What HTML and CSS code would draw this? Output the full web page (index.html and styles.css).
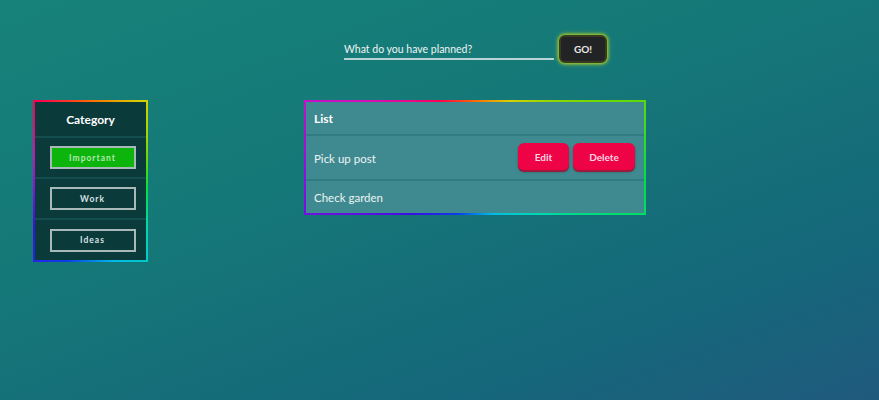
FILE: index.html
```html
<!DOCTYPE html>
<html>
<head>
<meta charset="utf-8">
<link rel="stylesheet" href="styles.css">
</head>
<body>
<div class="page">
  <div class="spacer"></div>
  <form class="add-form">
    <input class="add-input" type="text" placeholder="What do you have planned?">
    <button class="go-btn" type="button">GO!</button>
  </form>
  <aside class="rainbow cat-frame">
    <div class="cat">
      <div class="cat-title">Category</div>
      <div class="cat-row"><button class="cat-btn active" type="button">Important</button></div>
      <div class="cat-row"><button class="cat-btn" type="button">Work</button></div>
      <div class="cat-row last"><button class="cat-btn" type="button">Ideas</button></div>
    </div>
  </aside>
  <section class="rainbow list-frame">
    <div class="list">
      <div class="list-head">List</div>
      <div class="list-row">
        <span class="item-text">Pick up post</span>
        <div class="actions">
          <button class="act-btn edit" type="button">Edit</button>
          <button class="act-btn delete" type="button">Delete</button>
        </div>
      </div>
      <div class="list-row last">
        <span class="item-text">Check garden</span>
      </div>
    </div>
  </section>
</div>
</body>
</html>
```
FILE: styles.css
```css
* { box-sizing: border-box; }
html, body { margin: 0; height: 100%; }
body {
  width: 879px;
  height: 400px;
  overflow: hidden;
  font-family: Lato, "Open Sans", sans-serif;
  color: #fff;
  background: linear-gradient(160deg, #168279 0%, #157878 40%, #15677a 78%, #205a7e 100%);
}
.page {
  display: grid;
  grid-template-columns: 115px 342px;
  column-gap: 156px;
  row-gap: 37px;
  padding: 35px 0 0 33px;
  align-items: start;
}
.add-form {
  display: flex;
  align-items: flex-start;
  justify-content: center;
  gap: 5px;
  margin-left: 1px;
}
.add-input {
  width: 210px;
  height: 25px;
  background: transparent;
  border: none;
  border-bottom: 2px solid #b9d4d6;
  color: #fff;
  font-family: Lato, sans-serif;
  font-size: 10.5px;
  font-weight: 400;
  padding: 4px 0 0 0;
  outline: none;
}
.add-input::placeholder { color: #f0f5f5; }
.go-btn {
  width: 48px;
  height: 28px;
  background: #222324;
  border: 2px solid #3a3a20;
  border-radius: 6px;
  color: #e8e8e8;
  font-family: Lato, sans-serif;
  font-weight: 700;
  font-size: 10px;
  box-shadow: 0 0 3px 1px #9acc2a, 0 0 5px 1px rgba(200, 200, 40, 0.5);
}
.rainbow {
  padding: 2px;
  background: conic-gradient(from 0deg, #ff6a00, #d8d000, #6fd800, #00e040, #00d8b0, #00b8e8, #0a40e8, #3a10e0, #8a10e0, #d010c0, #ff0050, #ff6a00);
}
.cat-frame { width: 115px; }
.cat {
  background: #0b3a3b;
}
.cat-title {
  height: 36px;
  display: flex;
  align-items: center;
  justify-content: center;
  font-weight: 700;
  font-size: 12px;
  border-bottom: 2px solid #134d4d;
}
.cat-row {
  height: 41px;
  display: flex;
  align-items: center;
  justify-content: center;
  padding-left: 4px;
  border-bottom: 2px solid #134d4d;
}
.cat-row.last { border-bottom: none; height: 40px; }
.cat-btn {
  width: 86px;
  height: 23px;
  background: transparent;
  border: 2px solid #a9b8b8;
  color: #d8e2e2;
  font-family: Lato, sans-serif;
  font-size: 8.5px;
  font-weight: 700;
  letter-spacing: 1px;
  padding: 0;
}
.cat-btn.active {
  background: #0cb40c;
  color: #b5e8b5;
}
.list-frame { width: 342px; }
.list {
  background: #3f8a91;
}
.list-head {
  height: 34px;
  display: flex;
  align-items: center;
  padding-left: 8px;
  font-weight: 700;
  font-size: 12px;
  border-bottom: 2px solid #2f7c83;
}
.list-row {
  height: 45px;
  display: flex;
  align-items: center;
  justify-content: space-between;
  padding: 0 9px 0 8px;
  font-size: 11.5px;
  color: #eef4f4;
  border-bottom: 2px solid #2f7c83;
}
.item-text { margin-top: 1px; }
.list-row.last { border-bottom: none; height: 32px; }
.actions {
  display: flex;
  gap: 4px;
  margin-top: -2px;
}
.act-btn {
  height: 27px;
  border: none;
  border-radius: 6px;
  background: #ef0347;
  color: #ffd6e0;
  font-family: Lato, sans-serif;
  font-size: 10px;
  font-weight: 700;
  box-shadow: 0 2px 0 #9c1a3a, 0 2px 3px rgba(0,0,0,0.3);
  padding: 0;
}
.act-btn.edit { width: 51px; }
.act-btn.delete { width: 62px; }
```
